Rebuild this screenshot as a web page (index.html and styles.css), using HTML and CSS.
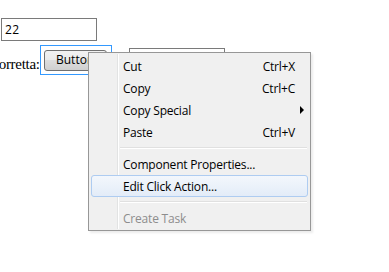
FILE: index.html
```html
<!DOCTYPE html>
<html lang="en">
<head>
    <meta charset="UTF-8">
    <title>Edit Click Action</title>
    <link rel="stylesheet" href="styles.css">
</head>
<body>
    <div class="form">
        <div class="field-row">
            <div class="textbox">22</div>
        </div>
        <div class="button-row">
            <span class="label">Corretta:</span>
            <div class="focus-ring">
                <div class="win-button">Button</div>
            </div>
            <div class="textbox other"></div>
        </div>
    </div>

    <div class="context-menu">
        <div class="menu-item"><span>Cut</span><span class="shortcut">Ctrl+X</span></div>
        <div class="menu-item"><span>Copy</span><span class="shortcut">Ctrl+C</span></div>
        <div class="menu-item"><span>Copy Special</span><span class="arrow"></span></div>
        <div class="menu-item"><span>Paste</span><span class="shortcut">Ctrl+V</span></div>
        <div class="separator"></div>
        <div class="menu-item"><span>Component Properties...</span></div>
        <div class="menu-item active"><span>Edit Click Action...</span></div>
        <div class="separator"></div>
        <div class="menu-item disabled"><span>Create Task</span></div>
    </div>
</body>
</html>
```

FILE: styles.css
```css
* {
    margin: 0;
    padding: 0;
    box-sizing: border-box;
}

body {
    background: #fff;
    font-family: 'Liberation Serif', serif;
    position: relative;
    width: 389px;
    height: 272px;
    overflow: hidden;
}

.form {
    padding-top: 18px;
}

.field-row {
    padding-left: 1px;
}

.textbox {
    width: 96px;
    height: 23px;
    border: 1px solid #7a7a7a;
    background: #fff;
    font-family: 'Open Sans', sans-serif;
    font-size: 12px;
    line-height: 21px;
    padding-left: 3px;
    letter-spacing: 0.5px;
}

.button-row {
    display: flex;
    align-items: flex-start;
    margin-top: 4px;
}

.label {
    font-size: 15px;
    margin-left: -11px;
    padding-top: 11px;
    white-space: nowrap;
    letter-spacing: -0.3px;
}

.focus-ring {
    border: 1px solid #3399ff;
    padding: 4px 4px 3px 3px;
}

.win-button {
    width: 63px;
    height: 21px;
    border: 1px solid #707070;
    border-radius: 3px;
    background: linear-gradient(#f2f2f2 0%, #ebebeb 45%, #dddddd 50%, #cfcfcf 100%);
    font-family: 'Open Sans', sans-serif;
    font-size: 12px;
    line-height: 18px;
    text-align: center;
    overflow: hidden;
    white-space: nowrap;
}

.textbox.other {
    margin-left: 17px;
    margin-top: 3px;
    width: 96px;
    height: 30px;
}

/* Context menu over the form */
.context-menu {
    position: absolute;
    left: 88px;
    top: 52px;
    width: 223px;
    height: 179px;
    border: 1px solid #979797;
    background: #f0f0f0;
    padding: 2px 2px;
    font-family: 'Open Sans', sans-serif;
    font-size: 12px;
    color: #000;
    box-shadow: 2px 2px 2px rgba(0, 0, 0, 0.08);
}

.context-menu::before {
    content: '';
    position: absolute;
    top: 1px;
    bottom: 1px;
    left: 28px;
    width: 1px;
    background: #e2e3e3;
    border-right: 1px solid #fff;
    box-sizing: content-box;
}

.menu-item {
    position: relative;
    display: flex;
    justify-content: space-between;
    align-items: center;
    height: 22px;
    padding-left: 31px;
    padding-right: 12px;
    border: 1px solid transparent;
    border-radius: 3px;
    letter-spacing: -0.2px;
}

.menu-item.active {
    border-color: #aeccf1;
    background: linear-gradient(#f3f7fc, #e3ecf8);
}

.menu-item.disabled {
    color: #8d8d8d;
}

.arrow {
    width: 0;
    height: 0;
    border-top: 4px solid transparent;
    border-bottom: 4px solid transparent;
    border-left: 4px solid #000;
    margin-right: -9px;
}

.separator {
    height: 10px;
    margin-left: 29px;
    position: relative;
}

.separator::after {
    content: '';
    position: absolute;
    left: 0;
    right: 1px;
    top: 4px;
    height: 1px;
    background: #e0e0e0;
    border-bottom: 1px solid #fff;
    box-sizing: content-box;
}
```
